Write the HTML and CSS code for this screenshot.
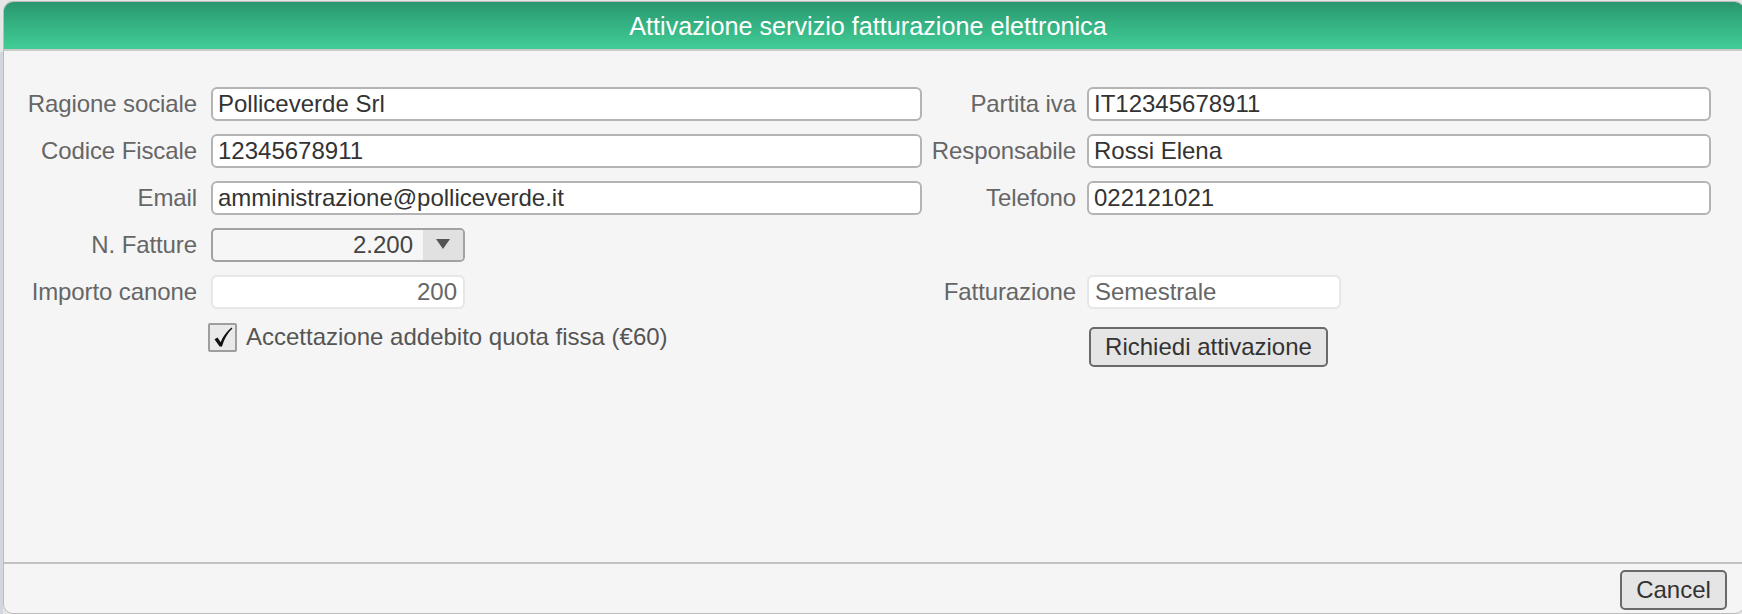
FILE: index.html
```html
<!DOCTYPE html>
<html lang="it">
<head>
<meta charset="utf-8">
<title>Attivazione servizio fatturazione elettronica</title>
<link rel="stylesheet" href="styles.css">
</head>
<body>
<div class="backdrop-strip"></div>
<div class="dialog">
  <div class="dialog-header">Attivazione servizio fatturazione elettronica</div>
  <div class="dialog-body">
    <div class="form-grid">
      <label class="lbl lbl-left">Ragione sociale</label>
      <div class="field"><input class="txt" type="text" value="Polliceverde Srl"></div>
      <label class="lbl lbl-right">Partita iva</label>
      <div class="field"><input class="txt" type="text" value="IT12345678911"></div>

      <label class="lbl lbl-left">Codice Fiscale</label>
      <div class="field"><input class="txt" type="text" value="12345678911"></div>
      <label class="lbl lbl-right">Responsabile</label>
      <div class="field"><input class="txt" type="text" value="Rossi Elena"></div>

      <label class="lbl lbl-left">Email</label>
      <div class="field"><input class="txt" type="text" value="amministrazione@polliceverde.it"></div>
      <label class="lbl lbl-right">Telefono</label>
      <div class="field"><input class="txt" type="text" value="022121021"></div>

      <label class="lbl lbl-left">N. Fatture</label>
      <div class="field">
        <div class="select">
          <span class="select-value">2.200</span>
          <span class="select-arrow"><svg width="16" height="12" viewBox="0 0 16 12"><path d="M1 1 H15 L8 11 Z" fill="#555"/></svg></span>
        </div>
      </div>
      <div class="spacer"></div>
      <div class="spacer"></div>

      <label class="lbl lbl-left">Importo canone</label>
      <div class="field"><div class="txt-disabled num">200</div></div>
      <label class="lbl lbl-right">Fatturazione</label>
      <div class="field"><div class="txt-disabled">Semestrale</div></div>

      <div class="spacer"></div>
      <div class="field check-row">
        <span class="checkbox"><svg width="25" height="25" viewBox="0 0 25 25"><path d="M4.5 14.2 L7.6 12.4 L10.6 17.2 C13.2 11.2 16.8 6.2 21.6 2.6 L22.4 3.6 C17.8 8 14.2 14 12 21.6 L9.6 21.6 Z" fill="#111"/></svg></span>
        <span class="check-label">Accettazione addebito quota fissa (€60)</span>
      </div>
      <div class="spacer"></div>
      <div class="field"><button class="btn btn-activate" type="button">Richiedi attivazione</button></div>
    </div>
  </div>
  <div class="dialog-footer">
    <button class="btn btn-cancel" type="button">Cancel</button>
  </div>
</div>
</body>
</html>
```
FILE: styles.css
```css
html, body {
  margin: 0;
  padding: 0;
}
body {
  width: 1742px;
  height: 614px;
  overflow: hidden;
  background: #e6e6e6;
  font-family: "Liberation Sans", Arial, Helvetica, sans-serif;
  display: flex;
  padding: 1px 0 0 3px;
  box-sizing: border-box;
  position: relative;
}
.backdrop-strip {
  position: absolute;
  left: 0;
  top: 52px;
  width: 3px;
  height: 562px;
  background: #d3d6dc;
}
.dialog {
  position: relative;
  width: 1742px;
  height: 613px;
  box-sizing: border-box;
  border: 1px solid #bcbcbc;
  border-radius: 10px;
  background: #f5f5f5;
  display: flex;
  flex-direction: column;
  overflow: hidden;
  flex: none;
}
.dialog-header {
  height: 46px;
  border-bottom: 2px solid #cbcbcb;
  background: linear-gradient(to bottom, #29966e 0%, #35b383 50%, #42cd96 100%);
  color: #ffffff;
  font-size: 25.2px;
  display: flex;
  align-items: center;
  justify-content: center;
  padding-right: 12px;
  padding-top: 1px;
  box-sizing: content-box;
}
.dialog-body {
  flex: 1;
  padding-top: 36px;
}
.form-grid {
  display: grid;
  grid-template-columns: 207px 711px 165px 624px;
  grid-auto-rows: 34px;
  row-gap: 13px;
}
.lbl {
  font-size: 24px;
  color: #666666;
  text-align: right;
  align-self: center;
  white-space: nowrap;
  letter-spacing: -0.1px;
}
.lbl-left { padding-right: 14px; }
.lbl-right { padding-right: 11px; }
.field {
  display: flex;
  align-items: stretch;
}
.txt {
  width: 100%;
  height: 34px;
  box-sizing: border-box;
  border: 2px solid #b4b4b4;
  border-radius: 6px;
  background: #ffffff;
  font-family: "Liberation Sans", Arial, Helvetica, sans-serif;
  font-size: 24px;
  color: #333333;
  padding: 0 5px;
  margin: 0;
  outline: none;
}
.select {
  width: 254px;
  height: 34px;
  box-sizing: border-box;
  border: 2px solid #a2a2a2;
  border-radius: 5px;
  background: #f6f6f6;
  display: flex;
  overflow: hidden;
}
.select-value {
  flex: 1;
  text-align: right;
  font-size: 24px;
  color: #444444;
  line-height: 30px;
  padding-right: 10px;
}
.select-arrow {
  width: 40px;
  background: #e1e1e1;
  display: flex;
  align-items: center;
  justify-content: center;
  padding-bottom: 3px;
  box-sizing: border-box;
}
.txt-disabled {
  width: 254px;
  height: 34px;
  box-sizing: border-box;
  border: 2px solid #e6e6e6;
  border-radius: 6px;
  background: #ffffff;
  font-size: 24px;
  color: #666666;
  line-height: 30px;
  padding: 0 6px;
}
.txt-disabled.num {
  text-align: right;
  padding-right: 6px;
}
.check-row {
  align-items: flex-start;
  margin-left: -3px;
  padding-top: 1px;
  gap: 9px;
}
.checkbox {
  width: 29px;
  height: 29px;
  box-sizing: border-box;
  border: 2px solid #9e9e9e;
  border-radius: 2px;
  background: #e9e9e9;
  display: flex;
  align-items: center;
  justify-content: center;
  flex: none;
}
.check-label {
  font-size: 24px;
  color: #555555;
  line-height: 28px;
  white-space: nowrap;
}
.btn {
  font-family: "Liberation Sans", Arial, Helvetica, sans-serif;
  font-size: 24px;
  color: #333333;
  background: #e5e5e5;
  border: 2px solid #6a6a6a;
  border-radius: 5px;
  height: 40px;
  box-sizing: border-box;
  padding: 0 11px;
  margin: 0;
  cursor: pointer;
}
.btn-activate {
  margin-top: 5px;
  margin-left: 2px;
  width: 239px;
  flex: none;
}
.dialog-footer {
  border-top: 2px solid #c2c2c2;
  display: flex;
  justify-content: flex-end;
  align-items: flex-start;
  padding-top: 6px;
  padding-right: 17px;
  box-sizing: border-box;
  height: 51px;
}
.btn-cancel {
  width: 107px;
}
```
